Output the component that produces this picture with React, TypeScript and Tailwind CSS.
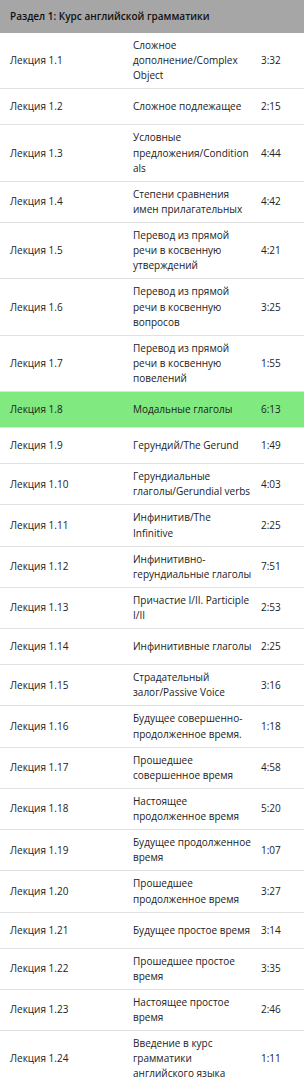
import React from "react";

type Lecture = {
  num: string;
  title: string[];
  time: string;
  active?: boolean;
};

const lectures: Lecture[] = [
  { num: "1.1", title: ["Сложное", "дополнение/Complex", "Object"], time: "3:32" },
  { num: "1.2", title: ["Сложное подлежащее"], time: "2:15" },
  { num: "1.3", title: ["Условные", "предложения/Condition", "als"], time: "4:44" },
  { num: "1.4", title: ["Степени сравнения", "имен прилагательных"], time: "4:42" },
  { num: "1.5", title: ["Перевод из прямой", "речи в косвенную", "утверждений"], time: "4:21" },
  { num: "1.6", title: ["Перевод из прямой", "речи в косвенную", "вопросов"], time: "3:25" },
  { num: "1.7", title: ["Перевод из прямой", "речи в косвенную", "повелений"], time: "1:55" },
  { num: "1.8", title: ["Модальные глаголы"], time: "6:13", active: true },
  { num: "1.9", title: ["Герундий/The Gerund"], time: "1:49" },
  { num: "1.10", title: ["Герундиальные", "глаголы/Gerundial verbs"], time: "4:03" },
  { num: "1.11", title: ["Инфинитив/The", "Infinitive"], time: "2:25" },
  { num: "1.12", title: ["Инфинитивно-", "герундиальные глаголы"], time: "7:51" },
  { num: "1.13", title: ["Причастие I/II. Participle", "I/II"], time: "2:53" },
  { num: "1.14", title: ["Инфинитивные глаголы"], time: "2:25" },
  { num: "1.15", title: ["Страдательный", "залог/Passive Voice"], time: "3:16" },
  { num: "1.16", title: ["Будущее совершенно-", "продолженное время."], time: "1:18" },
  { num: "1.17", title: ["Прошедшее", "совершенное время"], time: "4:58" },
  { num: "1.18", title: ["Настоящее", "продолженное время"], time: "5:20" },
  { num: "1.19", title: ["Будущее продолженное", "время"], time: "1:07" },
  { num: "1.20", title: ["Прошедшее", "продолженное время"], time: "3:27" },
  { num: "1.21", title: ["Будущее простое время"], time: "3:14" },
  { num: "1.22", title: ["Прошедшее простое", "время"], time: "3:35" },
  { num: "1.23", title: ["Настоящее простое", "время"], time: "2:46" },
  { num: "1.24", title: ["Введение в курс", "грамматики", "английского языка"], time: "1:11" },
];

export default function App() {
  return (
    <div className="w-[304px] bg-white text-[10px] leading-[15.12px] text-[#222] font-['Open_Sans',sans-serif]">
      {/* Section header */}
      <div className="flex items-center h-[33px] px-[10px] bg-[#a6a6a6] text-[#111] font-semibold">
        Раздел 1: Курс английской грамматики
      </div>

      {lectures.map((item) => (
        <div
          key={item.num}
          className={`grid grid-cols-[133px_128px_1fr] items-center min-h-[36px] py-[5px] border-b border-[#e2e2e2] ${
            item.active ? "bg-[#80e97f]" : "bg-white"
          }`}
        >
          <div className="pl-[10px] whitespace-nowrap">Лекция {item.num}</div>
          <div>
            {item.title.map((line, i) => (
              <div key={i} className="whitespace-nowrap">
                {line}
              </div>
            ))}
          </div>
          <div>{item.time}</div>
        </div>
      ))}
    </div>
  );
}
